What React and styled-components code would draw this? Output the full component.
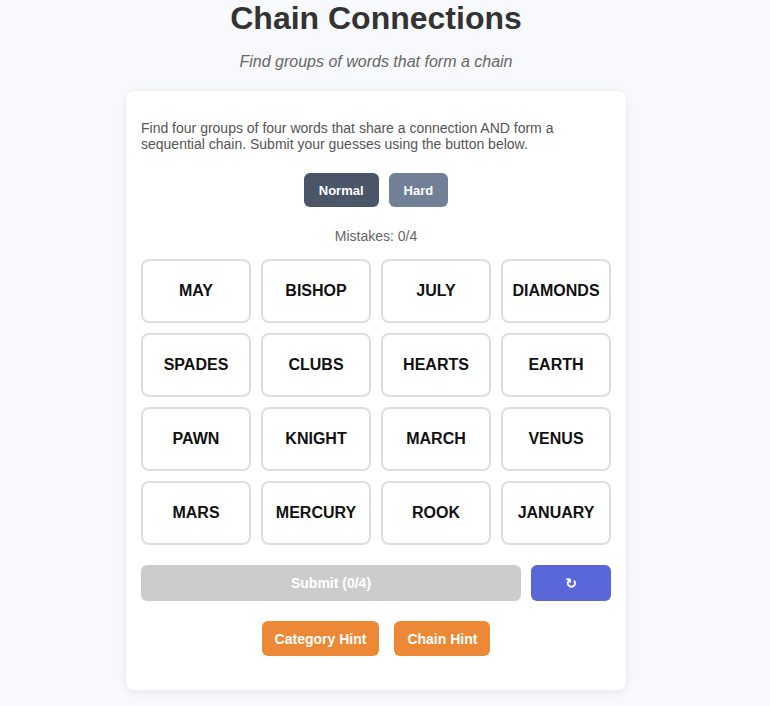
import React from 'react';
import styled, { createGlobalStyle } from 'styled-components';

const GlobalStyle = createGlobalStyle`
  html, body {
    margin: 0;
    padding: 0;
    background: #f7f9fc;
  }
  body {
    font-family: "Liberation Sans", Arial, sans-serif;
    color: #333;
  }
`;

// the reference was taken with a browser scrollbar on the right,
// so the content is centred in the remaining width
const Page = styled.div`
  padding: 0 18px 16px 0;
`;

const Title = styled.h1`
  margin: 0;
  text-align: center;
  font-size: 32px;
  line-height: 37px;
  font-weight: bold;
  color: #333;
`;

const Subtitle = styled.p`
  margin: 16px 0 20px;
  text-align: center;
  font-style: italic;
  font-size: 16px;
  line-height: 18px;
  color: #666;
`;

const Card = styled.div`
  width: 500px;
  box-sizing: border-box;
  margin: 0 auto;
  padding: 15px 15px 34px;
  background: #fff;
  border-radius: 8px;
  box-shadow: 0 2px 10px rgba(0, 0, 0, 0.08);
`;

const Intro = styled.p`
  margin: 14px 0 21px;
  font-size: 14px;
  line-height: 16px;
  color: #555;
`;

const Row = styled.div`
  display: flex;
  justify-content: center;
  gap: ${p => p.gap || 10}px;
`;

const ModeButton = styled.button`
  height: 34px;
  padding: 0 15px;
  border: none;
  border-radius: 6px;
  font-family: inherit;
  font-size: 13px;
  font-weight: bold;
  color: #fff;
  background: ${p => (p.active ? '#4a5568' : '#718096')};
  cursor: pointer;
`;

const Mistakes = styled.div`
  margin: 21px 0 15px;
  text-align: center;
  font-size: 14px;
  line-height: 16px;
  color: #666;
`;

const Grid = styled.div`
  display: grid;
  grid-template-columns: repeat(4, 1fr);
  gap: 10px;
`;

const Tile = styled.button`
  height: 64px;
  box-sizing: border-box;
  background: #fff;
  border: 2px solid #ddd;
  border-radius: 8px;
  font-family: inherit;
  font-size: 16px;
  font-weight: bold;
  color: #111;
  cursor: pointer;
`;

const ActionRow = styled.div`
  display: flex;
  gap: 10px;
  margin-top: 20px;
`;

const SubmitButton = styled.button`
  flex: 1;
  height: 36px;
  border: none;
  border-radius: 6px;
  background: #ccc;
  color: #fff;
  font-family: inherit;
  font-size: 14px;
  font-weight: bold;
`;

const ShuffleButton = styled.button`
  width: 80px;
  height: 36px;
  border: none;
  border-radius: 6px;
  background: #5a67d8;
  color: #fff;
  font-family: "DejaVu Sans", sans-serif;
  font-size: 14px;
  font-weight: bold;
  cursor: pointer;
`;

const HintRow = styled(Row)`
  margin-top: 20px;
`;

const HintButton = styled.button`
  height: 35px;
  padding: 0 13px;
  border: none;
  border-radius: 6px;
  background: #ed8936;
  color: #fff;
  font-family: inherit;
  font-size: 14px;
  font-weight: bold;
  cursor: pointer;
`;

const words = [
  'MAY', 'BISHOP', 'JULY', 'DIAMONDS',
  'SPADES', 'CLUBS', 'HEARTS', 'EARTH',
  'PAWN', 'KNIGHT', 'MARCH', 'VENUS',
  'MARS', 'MERCURY', 'ROOK', 'JANUARY',
];

export default function App() {
  const [mode, setMode] = React.useState('normal');
  return (
    <Page>
      <GlobalStyle />
      <Title>Chain Connections</Title>
      <Subtitle>Find groups of words that form a chain</Subtitle>
      <Card>
        <Intro>
          Find four groups of four words that share a connection AND form a sequential chain. Submit your guesses using the button below.
        </Intro>
        <Row>
          <ModeButton active={mode === 'normal'} onClick={() => setMode('normal')}>Normal</ModeButton>
          <ModeButton active={mode === 'hard'} onClick={() => setMode('hard')}>Hard</ModeButton>
        </Row>
        <Mistakes>Mistakes: 0/4</Mistakes>
        <Grid>
          {words.map(w => (
            <Tile key={w}>{w}</Tile>
          ))}
        </Grid>
        <ActionRow>
          <SubmitButton disabled>Submit (0/4)</SubmitButton>
          <ShuffleButton>↻</ShuffleButton>
        </ActionRow>
        <HintRow gap={15}>
          <HintButton>Category Hint</HintButton>
          <HintButton>Chain Hint</HintButton>
        </HintRow>
      </Card>
    </Page>
  );
}
